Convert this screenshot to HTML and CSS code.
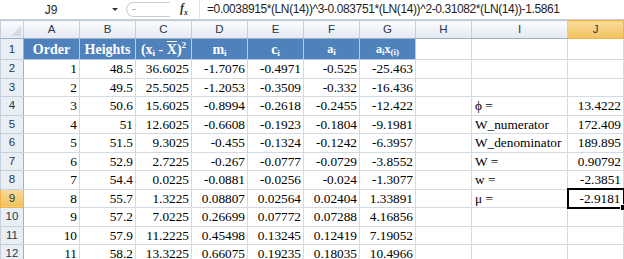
FILE: index.html
```html
<!DOCTYPE html>
<html lang="en">
    <head>
        <meta charset="utf-8" />
        <title>Shapiro-Wilk</title>
        <link rel="stylesheet" href="styles.css">
    </head>
    <body>
        <div class="formulaBar">
            <div class="nameBox">J9</div>
            <div class="dropArrow"></div>
            <div class="barTools">
                <span class="pill"></span>
                <span class="fx">f<sub>x</sub></span>
            </div>
            <div class="formula">=0.0038915*(LN(14))^3-0.083751*(LN(14))^2-0.31082*(LN(14))-1.5861</div>
        </div>
        <table class="sheet">
            <colgroup>
                <col class="rowHeadCol">
                <col class="std"><col class="std"><col class="std"><col class="std">
                <col class="std"><col class="std"><col class="std"><col class="std">
                <col class="wide">
                <col class="std">
            </colgroup>
            <tr class="colHeads">
                <th class="corner"><span class="cornerTri"></span></th>
                <th>A</th><th>B</th><th>C</th><th>D</th><th>E</th><th>F</th><th>G</th><th>H</th><th>I</th><th class="selHead">J</th>
            </tr>
            <tr class="titleRow">
                <th class="rowHead">1</th>
                <td class="title">Order</td>
                <td class="title">Heights</td>
                <td class="title">(x<sub>i</sub> - <span class="bar">X</span>)<sup>2</sup></td>
                <td class="title">m<sub>i</sub></td>
                <td class="title">c<sub>i</sub></td>
                <td class="title small">a<sub>i</sub></td>
                <td class="title small">a<sub>i</sub>x<sub>(i)</sub></td>
                <td></td><td></td><td></td>
            </tr>
            <tr><th class="rowHead">2</th><td>1</td><td>48.5</td><td>36.6025</td><td>-1.7076</td><td>-0.4971</td><td>-0.525</td><td>-25.463</td><td></td><td></td><td></td></tr>
            <tr><th class="rowHead">3</th><td>2</td><td>49.5</td><td>25.5025</td><td>-1.2053</td><td>-0.3509</td><td>-0.332</td><td>-16.436</td><td></td><td></td><td></td></tr>
            <tr><th class="rowHead">4</th><td>3</td><td>50.6</td><td>15.6025</td><td>-0.8994</td><td>-0.2618</td><td>-0.2455</td><td>-12.422</td><td></td><td class="label">ϕ =</td><td>13.4222</td></tr>
            <tr><th class="rowHead">5</th><td>4</td><td>51</td><td>12.6025</td><td>-0.6608</td><td>-0.1923</td><td>-0.1804</td><td>-9.1981</td><td></td><td class="label">W_numerator</td><td>172.409</td></tr>
            <tr><th class="rowHead">6</th><td>5</td><td>51.5</td><td>9.3025</td><td>-0.455</td><td>-0.1324</td><td>-0.1242</td><td>-6.3957</td><td></td><td class="label">W_denominator</td><td>189.895</td></tr>
            <tr><th class="rowHead">7</th><td>6</td><td>52.9</td><td>2.7225</td><td>-0.267</td><td>-0.0777</td><td>-0.0729</td><td>-3.8552</td><td></td><td class="label">W =</td><td>0.90792</td></tr>
            <tr><th class="rowHead">8</th><td>7</td><td>54.4</td><td>0.0225</td><td>-0.0881</td><td>-0.0256</td><td>-0.024</td><td>-1.3077</td><td></td><td class="label">w =</td><td>-2.3851</td></tr>
            <tr><th class="rowHead selHead">9</th><td>8</td><td>55.7</td><td>1.3225</td><td>0.08807</td><td>0.02564</td><td>0.02404</td><td>1.33891</td><td></td><td class="label">μ =</td><td class="active">-2.9181<span class="handle"></span></td></tr>
            <tr><th class="rowHead">10</th><td>9</td><td>57.2</td><td>7.0225</td><td>0.26699</td><td>0.07772</td><td>0.07288</td><td>4.16856</td><td></td><td></td><td></td></tr>
            <tr><th class="rowHead">11</th><td>10</td><td>57.9</td><td>11.2225</td><td>0.45498</td><td>0.13245</td><td>0.12419</td><td>7.19052</td><td></td><td></td><td></td></tr>
            <tr><th class="rowHead">12</th><td>11</td><td>58.2</td><td>13.3225</td><td>0.66075</td><td>0.19235</td><td>0.18035</td><td>10.4966</td><td></td><td></td><td></td></tr>
        </table>
    </body>
</html>
```

FILE: styles.css
```css
html, body {
    margin: 0;
    background-color: #ffffff;
    width: 624px;
    height: 259px;
    overflow: hidden;
}

.formulaBar {
    display: flex;
    align-items: center;
    height: 19px;
    border-bottom: 1px solid #c6ccd4;
    font-family: "Liberation Sans", sans-serif;
    font-size: 12px;
    color: #1e1e1e;
}

.nameBox {
    width: 112px;
    text-align: center;
    padding-right: 10px;
    box-sizing: border-box;
}

.dropArrow {
    width: 0;
    height: 0;
    border-left: 3px solid transparent;
    border-right: 3px solid transparent;
    border-top: 3px solid #333;
    margin-right: 8px;
}

.barTools {
    display: flex;
    align-items: center;
    width: 73px;
    height: 19px;
}

.pill {
    width: 44px;
    height: 15px;
    border: 1px solid #c9ced6;
    border-right: none;
    border-radius: 9px 0 0 9px;
    box-sizing: border-box;
    position: relative;
}

.pill::after {
    content: "";
    position: absolute;
    left: 5px;
    top: 6px;
    width: 4px;
    height: 1px;
    background-color: #b5bcc6;
}

.fx {
    margin-left: 10px;
    font-family: "Liberation Serif", serif;
    font-style: italic;
    font-weight: bold;
    font-size: 12px;
    color: #333;
}

.fx sub {
    font-size: 8px;
}

.formula {
    flex: 1;
    padding-left: 7px;
    height: 19px;
    line-height: 19px;
    white-space: nowrap;
    overflow: hidden;
    letter-spacing: -0.4px;
    border-left: 1px solid #dfe3e8;
}

.sheet {
    border-collapse: collapse;
    table-layout: fixed;
    width: 624px;
    font-family: "Liberation Serif", serif;
    font-size: 13.3px;
}

.rowHeadCol {
    width: 23px;
}

.std {
    width: 56px;
}

.wide {
    width: 96px;
}

.sheet td,
.sheet th {
    box-sizing: border-box;
}

.sheet td {
    border: 1px solid #d4dae4;
    height: 18.5px;
    padding: 0 2px 0 0;
    text-align: right;
    white-space: nowrap;
    overflow: visible;
    line-height: 15px;
}

.colHeads th {
    height: 18px;
    font-family: "Liberation Sans", sans-serif;
    font-weight: normal;
    font-size: 11.5px;
    line-height: 15px;
    color: #27384c;
    background: linear-gradient(#f9fbfd, #e4eaf2);
    border: 1px solid #c6d0dc;
    border-bottom-color: #9eb0c6;
    padding: 0;
}

.corner {
    position: relative;
}

.cornerTri {
    position: absolute;
    right: 2px;
    bottom: 2px;
    width: 0;
    height: 0;
    border-left: 10px solid transparent;
    border-bottom: 10px solid #d5dbe3;
}

.rowHead {
    font-family: "Liberation Sans", sans-serif;
    font-weight: normal;
    font-size: 11.5px;
    line-height: 15px;
    color: #27384c;
    background-color: #e9eef5;
    border: 1px solid #c6d0dc;
    border-right-color: #9eb0c6;
    padding: 0;
    text-align: center;
}

.colHeads th.selHead,
.rowHead.selHead {
    background: linear-gradient(#f9dc9c, #f1c15f);
    border-color: #f2b344;
}

.titleRow td,
.titleRow th {
    height: 21px;
}

.sheet td.title {
    background-color: #4f81bd;
    color: #ffffff;
    font-weight: bold;
    font-size: 14px;
    text-align: center;
    padding: 0;
    border-color: #b8cce4;
}

.sheet td.small {
    font-size: 12px;
}

.title sub {
    font-size: 9px;
    line-height: 0;
    vertical-align: -2px;
}

.title sup {
    font-size: 9px;
    line-height: 0;
    vertical-align: 6px;
}

.bar {
    text-decoration: overline;
}

.sheet td.label {
    text-align: left;
    padding-left: 3px;
}

.sheet td.active {
    border: 2px solid #000000;
    position: relative;
}

.handle {
    position: absolute;
    right: -4px;
    bottom: -4px;
    width: 5px;
    height: 5px;
    background-color: #000000;
    border: 1px solid #ffffff;
}
```
